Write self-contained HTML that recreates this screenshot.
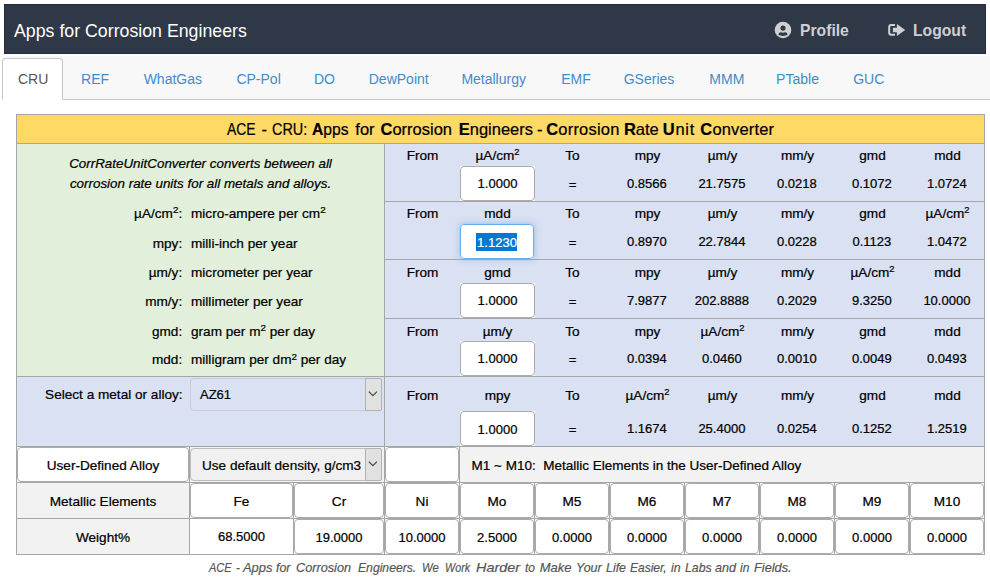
<!DOCTYPE html>
<html lang="en">
<head>
<meta charset="utf-8">
<title>ACE - CRU: Corrosion Rate Unit Converter</title>
<style>
*{box-sizing:border-box;}
html,body{margin:0;padding:0;background:#fff;}
body{width:990px;height:579px;position:relative;overflow:hidden;font-family:"Liberation Sans",sans-serif;font-size:13px;color:#000;}
#hdr{position:absolute;left:4px;top:4px;width:982px;height:50px;background:#2f3847;box-shadow:inset 0 0 0 1px #222c3c;}
#brand{position:absolute;left:10px;top:0;height:50px;line-height:54px;font-size:17.75px;color:#fff;white-space:nowrap;}
.hl{position:absolute;top:0;height:50px;line-height:53px;font-size:15.7px;font-weight:bold;color:#cfd0d2;white-space:nowrap;}
.ico{position:absolute;}
#nav{position:absolute;left:2px;top:56px;width:988px;height:44px;background:#f8f8f8;border-bottom:1px solid #c6c6c6;}
.tab{position:absolute;top:2px;display:block;height:42px;line-height:20px;padding:10px 15px;border:1px solid transparent;margin-right:2px;font-size:14px;color:#428bca;white-space:nowrap;}
.tab.on{color:#555;background:#fff;border:1px solid #c6c6c6;border-bottom-color:#fff;border-radius:4px 4px 0 0;}
#tbl{position:absolute;left:16px;top:114px;width:969px;height:441px;background:#a6a6a6;}
.bg{position:absolute;}
.y{background:#ffd966;}
.g{background:#e2efda;}
.b{background:#d9e1f2;}
.gr{background:#f2f2f2;}
.w{background:#fff;}
.t{position:absolute;white-space:nowrap;line-height:16px;height:16px;font-size:13.6px;}
.t,.in,.sel,#title{-webkit-text-stroke:0.22px #000;}
.n{font-size:13px;}
.c{text-align:center;}
.r{text-align:right;}
.i{font-style:italic;font-size:13.4px;}
.in{position:absolute;height:35px;line-height:36px;font-size:13px;background:#fff;text-align:center;white-space:nowrap;}
.lo{line-height:38px;}
.in::after{content:"";position:absolute;left:0;top:0;right:0;bottom:0;border:1px solid #ababab;border-radius:4px;}
.sel{position:absolute;height:33px;line-height:33px;font-size:13.6px;border:1px solid #bcbcbc;border-radius:4px;white-space:nowrap;padding-left:9px;}
.arr{position:absolute;right:-1px;top:-1px;width:17px;height:33px;background:#e1e1e1;border:1px solid #b2b2b2;border-radius:0 2px 2px 0;}
sup{font-size:9.4px;line-height:0;vertical-align:baseline;position:relative;top:-4.6px;}
sup.s2{font-size:9.9px;top:-4.5px;}
#title{position:absolute;left:17px;top:115px;width:968px;height:28px;line-height:29px;text-align:center;font-size:16.5px;white-space:nowrap;}
#title span{position:absolute;top:0;transform-origin:0 50%;}
#foot span{position:absolute;top:0;transform-origin:0 50%;}
#foot{position:absolute;left:0;top:559px;width:990px;height:18px;line-height:18px;font-style:italic;color:#555;-webkit-text-stroke:0.2px #555;font-size:12.96px;white-space:nowrap;}
#nob::after{display:none;}
#foc{width:74px !important;line-height:38px;border-radius:4px;box-shadow:0 0 6px rgba(102,175,233,.7);}
#foc::after{border-color:#66afe9;}
.selt{-webkit-text-stroke:0.2px #fff;background:#0078d7;color:#fff;padding:2px 0 1px 1px;margin-left:-1px;}
</style>
</head>
<body>

<div id="hdr"><div id="brand">Apps for Corrosion Engineers</div>
<svg class="ico" style="left:770.4px;top:16.7px" width="18" height="18" viewBox="0 0 18 18"><circle cx="9" cy="9" r="8.3" fill="#cfd0d2"/><circle cx="9" cy="7.1" r="2.55" fill="#2f3847"/><path d="M4.5 13.5 C4.5 12 5.8 11.3 7 11.3 C8 11.85 10 11.85 11 11.3 C12.2 11.3 13.5 12 13.5 13.5 C12.4 14.5 10.6 14.9 9 14.9 C7.4 14.9 5.6 14.5 4.5 13.5 Z" fill="#2f3847"/></svg>
<div class="hl" style="left:796px">Profile</div>
<svg class="ico" style="left:883px;top:18px" width="20" height="16" viewBox="0 0 20 16"><path d="M8 3 H4.2 C3.1 3 2.2 3.9 2.2 5 V10.8 C2.2 11.9 3.1 12.8 4.2 12.8 H8" fill="none" stroke="#cfd0d2" stroke-width="2"/><path d="M5.9 5.85 H9.9 V2 L18.2 8 L9.9 14 V10.15 H5.9 Z" fill="#cfd0d2"/></svg>
<div class="hl" style="left:909px">Logout</div>
</div>
<div id="nav">
<div class="tab on" style="left:0px;padding-left:15px;padding-right:0;width:61px">CRU</div>
<div class="tab" style="left:63.04px">REF</div>
<div class="tab" style="left:125.64px">WhatGas</div>
<div class="tab" style="left:218.4px">CP-Pol</div>
<div class="tab" style="left:295.96px">DO</div>
<div class="tab" style="left:350.76px">DewPoint</div>
<div class="tab" style="left:443.38px">Metallurgy</div>
<div class="tab" style="left:543.28px">EMF</div>
<div class="tab" style="left:605.74px">GSeries</div>
<div class="tab" style="left:691.32px">MMM</div>
<div class="tab" style="left:758.12px">PTable</div>
<div class="tab" style="left:835.23px">GUC</div>
</div>
<div id="tbl"></div>
<div class="bg y" style="left:17px;top:115px;width:967px;height:28px;"></div>
<div class="bg g" style="left:17px;top:144px;width:367px;height:232px;"></div>
<div class="bg b" style="left:385px;top:144px;width:599px;height:57px;"></div>
<div class="bg b" style="left:385px;top:202px;width:599px;height:57px;"></div>
<div class="bg b" style="left:385px;top:260px;width:599px;height:58px;"></div>
<div class="bg b" style="left:385px;top:319px;width:599px;height:57px;"></div>
<div class="bg b" style="left:17px;top:377px;width:367px;height:69px;"></div>
<div class="bg b" style="left:385px;top:377px;width:599px;height:69px;"></div>
<div class="bg gr" style="left:17px;top:447px;width:172px;height:35px;"></div>
<div class="bg gr" style="left:190px;top:447px;width:194px;height:35px;"></div>
<div class="bg gr" style="left:385px;top:447px;width:74px;height:35px;"></div>
<div class="bg gr" style="left:460px;top:447px;width:524px;height:35px;"></div>
<div class="bg gr" style="left:17px;top:483px;width:172px;height:35px;"></div>
<div class="bg gr" style="left:17px;top:519px;width:172px;height:35px;"></div>
<div class="bg gr" style="left:190px;top:483px;width:103px;height:35px;"></div>
<div class="bg gr" style="left:190px;top:519px;width:103px;height:35px;"></div>
<div class="bg gr" style="left:294px;top:483px;width:90px;height:35px;"></div>
<div class="bg gr" style="left:294px;top:519px;width:90px;height:35px;"></div>
<div class="bg gr" style="left:385px;top:483px;width:74px;height:35px;"></div>
<div class="bg gr" style="left:385px;top:519px;width:74px;height:35px;"></div>
<div class="bg gr" style="left:460px;top:483px;width:74px;height:35px;"></div>
<div class="bg gr" style="left:460px;top:519px;width:74px;height:35px;"></div>
<div class="bg gr" style="left:535px;top:483px;width:74px;height:35px;"></div>
<div class="bg gr" style="left:535px;top:519px;width:74px;height:35px;"></div>
<div class="bg gr" style="left:610px;top:483px;width:74px;height:35px;"></div>
<div class="bg gr" style="left:610px;top:519px;width:74px;height:35px;"></div>
<div class="bg gr" style="left:685px;top:483px;width:74px;height:35px;"></div>
<div class="bg gr" style="left:685px;top:519px;width:74px;height:35px;"></div>
<div class="bg gr" style="left:760px;top:483px;width:74px;height:35px;"></div>
<div class="bg gr" style="left:760px;top:519px;width:74px;height:35px;"></div>
<div class="bg gr" style="left:835px;top:483px;width:74px;height:35px;"></div>
<div class="bg gr" style="left:835px;top:519px;width:74px;height:35px;"></div>
<div class="bg gr" style="left:910px;top:483px;width:74px;height:35px;"></div>
<div class="bg gr" style="left:910px;top:519px;width:74px;height:35px;"></div>
<div id="title"><span style="left:210.3px;transform:scaleX(0.845);">ACE</span> <span style="left:244.6px;">-</span> <span style="left:255.1px;transform:scaleX(0.875);">CRU:</span> <span style="left:295.3px;transform:scaleX(0.95);"><b>A</b>pps</span> <span style="left:338.3px;">for</span> <span style="left:363.5px;"><b>C</b>orrosion</span> <span style="left:441.7px;"><b>E</b>ngineers</span> <span style="left:519.9px;">-</span> <span style="left:529.2px;letter-spacing:0.2px;"><b>C</b>orrosion</span> <span style="left:606.9px;"><b>R</b>ate</span> <span style="left:645.8px;letter-spacing:0.7px;"><b>U</b>nit</span> <span style="left:683.3px;letter-spacing:0.15px;"><b>C</b>onverter</span></div>
<div class="t c i" style="left:17px;top:155.6px;width:367px;">CorrRateUnitConverter converts between all</div>
<div class="t c i" style="left:17px;top:176.1px;width:367px;">corrosion rate units for all metals and alloys.</div>
<div class="t r" style="left:17px;top:205.5px;width:165.2px;">µA/cm<sup class="s2">2</sup>:</div>
<div class="t " style="left:191px;top:205.5px;">micro-ampere per cm<sup class="s2">2</sup></div>
<div class="t r" style="left:17px;top:235.5px;width:165.2px;">mpy:</div>
<div class="t " style="left:191px;top:235.5px;">milli-inch per year</div>
<div class="t r" style="left:17px;top:264.5px;width:165.2px;">µm/y:</div>
<div class="t " style="left:191px;top:264.5px;">micrometer per year</div>
<div class="t r" style="left:17px;top:293.5px;width:165.2px;">mm/y:</div>
<div class="t " style="left:191px;top:293.5px;">millimeter per year</div>
<div class="t r" style="left:17px;top:323.5px;width:165.2px;">gmd:</div>
<div class="t " style="left:191px;top:323.5px;">gram per m<sup class="s2">2</sup> per day</div>
<div class="t r" style="left:17px;top:352px;width:165.2px;">mdd:</div>
<div class="t " style="left:191px;top:352px;">milligram per dm<sup class="s2">2</sup> per day</div>
<div class="t c" style="left:385px;top:147.5px;width:75px;">From</div>
<div class="t c" style="left:460px;top:147.5px;width:75px;">µA/cm<sup>2</sup></div>
<div class="in" style="left:460px;top:166px;width:75px">1.0000</div>
<div class="t c" style="left:535px;top:147.5px;width:75px;">To</div>
<div class="t c n" style="left:535px;top:176.5px;width:75px;">=</div>
<div class="t c" style="left:610px;top:147.5px;width:75px;">mpy</div>
<div class="t c n" style="left:609.4px;top:175.5px;width:75px;">0.8566</div>
<div class="t c" style="left:685px;top:147.5px;width:75px;">µm/y</div>
<div class="t c n" style="left:684.4px;top:175.5px;width:75px;">21.7575</div>
<div class="t c" style="left:760px;top:147.5px;width:75px;">mm/y</div>
<div class="t c n" style="left:759.4px;top:175.5px;width:75px;">0.0218</div>
<div class="t c" style="left:835px;top:147.5px;width:75px;">gmd</div>
<div class="t c n" style="left:834.4px;top:175.5px;width:75px;">0.1072</div>
<div class="t c" style="left:910px;top:147.5px;width:75px;">mdd</div>
<div class="t c n" style="left:909.4px;top:175.5px;width:75px;">1.0724</div>
<div class="t c" style="left:385px;top:205.5px;width:75px;">From</div>
<div class="t c" style="left:460px;top:205.5px;width:75px;">mdd</div>
<div class="in" style="left:460px;top:224px;width:75px;" id="foc"><span class="selt">1.1230</span></div>
<div class="t c" style="left:535px;top:205.5px;width:75px;">To</div>
<div class="t c n" style="left:535px;top:234.5px;width:75px;">=</div>
<div class="t c" style="left:610px;top:205.5px;width:75px;">mpy</div>
<div class="t c n" style="left:609.4px;top:233.5px;width:75px;">0.8970</div>
<div class="t c" style="left:685px;top:205.5px;width:75px;">µm/y</div>
<div class="t c n" style="left:684.4px;top:233.5px;width:75px;">22.7844</div>
<div class="t c" style="left:760px;top:205.5px;width:75px;">mm/y</div>
<div class="t c n" style="left:759.4px;top:233.5px;width:75px;">0.0228</div>
<div class="t c" style="left:835px;top:205.5px;width:75px;">gmd</div>
<div class="t c n" style="left:834.4px;top:233.5px;width:75px;">0.1123</div>
<div class="t c" style="left:910px;top:205.5px;width:75px;">µA/cm<sup>2</sup></div>
<div class="t c n" style="left:909.4px;top:233.5px;width:75px;">1.0472</div>
<div class="t c" style="left:385px;top:265px;width:75px;">From</div>
<div class="t c" style="left:460px;top:265px;width:75px;">gmd</div>
<div class="in" style="left:460px;top:283px;width:75px">1.0000</div>
<div class="t c" style="left:535px;top:265px;width:75px;">To</div>
<div class="t c n" style="left:535px;top:294px;width:75px;">=</div>
<div class="t c" style="left:610px;top:265px;width:75px;">mpy</div>
<div class="t c n" style="left:609.4px;top:293px;width:75px;">7.9877</div>
<div class="t c" style="left:685px;top:265px;width:75px;">µm/y</div>
<div class="t c n" style="left:684.4px;top:293px;width:75px;">202.8888</div>
<div class="t c" style="left:760px;top:265px;width:75px;">mm/y</div>
<div class="t c n" style="left:759.4px;top:293px;width:75px;">0.2029</div>
<div class="t c" style="left:835px;top:265px;width:75px;">µA/cm<sup>2</sup></div>
<div class="t c n" style="left:834.4px;top:293px;width:75px;">9.3250</div>
<div class="t c" style="left:910px;top:265px;width:75px;">mdd</div>
<div class="t c n" style="left:909.4px;top:293px;width:75px;">10.0000</div>
<div class="t c" style="left:385px;top:324px;width:75px;">From</div>
<div class="t c" style="left:460px;top:324px;width:75px;">µm/y</div>
<div class="in" style="left:460px;top:341px;width:75px">1.0000</div>
<div class="t c" style="left:535px;top:324px;width:75px;">To</div>
<div class="t c n" style="left:535px;top:352px;width:75px;">=</div>
<div class="t c" style="left:610px;top:324px;width:75px;">mpy</div>
<div class="t c n" style="left:609.4px;top:351px;width:75px;">0.0394</div>
<div class="t c" style="left:685px;top:324px;width:75px;">µA/cm<sup>2</sup></div>
<div class="t c n" style="left:684.4px;top:351px;width:75px;">0.0460</div>
<div class="t c" style="left:760px;top:324px;width:75px;">mm/y</div>
<div class="t c n" style="left:759.4px;top:351px;width:75px;">0.0010</div>
<div class="t c" style="left:835px;top:324px;width:75px;">gmd</div>
<div class="t c n" style="left:834.4px;top:351px;width:75px;">0.0049</div>
<div class="t c" style="left:910px;top:324px;width:75px;">mdd</div>
<div class="t c n" style="left:909.4px;top:351px;width:75px;">0.0493</div>
<div class="t c" style="left:385px;top:388px;width:75px;">From</div>
<div class="t c" style="left:460px;top:388px;width:75px;">mpy</div>
<div class="in lo" style="left:460px;top:411px;width:75px">1.0000</div>
<div class="t c" style="left:535px;top:388px;width:75px;">To</div>
<div class="t c n" style="left:535px;top:422px;width:75px;">=</div>
<div class="t c" style="left:610px;top:388px;width:75px;">µA/cm<sup>2</sup></div>
<div class="t c n" style="left:609.4px;top:421px;width:75px;">1.1674</div>
<div class="t c" style="left:685px;top:388px;width:75px;">µm/y</div>
<div class="t c n" style="left:684.4px;top:421px;width:75px;">25.4000</div>
<div class="t c" style="left:760px;top:388px;width:75px;">mm/y</div>
<div class="t c n" style="left:759.4px;top:421px;width:75px;">0.0254</div>
<div class="t c" style="left:835px;top:388px;width:75px;">gmd</div>
<div class="t c n" style="left:834.4px;top:421px;width:75px;">0.1252</div>
<div class="t c" style="left:910px;top:388px;width:75px;">mdd</div>
<div class="t c n" style="left:909.4px;top:421px;width:75px;">1.2519</div>
<div class="t r" style="left:17px;top:387.4px;width:165.6px;">Select a metal or alloy:</div>
<div class="sel" style="left:190px;top:378px;width:192px;border-color:#c8cbd2;font-size:13px;line-height:32px">AZ61<div class="arr"><svg width="15" height="32" viewBox="0 0 15 32"><path d="M2.9 12.7 L6.9 16.7 L10.9 12.7" fill="none" stroke="#444" stroke-width="1.2"/></svg></div></div>
<div class="in lo" style="left:17px;top:447px;width:172px;font-size:13.6px">User-Defined Alloy</div>
<div class="sel" style="left:190px;top:448px;width:192px;background:#f0f0f0;padding-left:11px">Use default density, g/cm3<div class="arr"><svg width="15" height="32" viewBox="0 0 15 32"><path d="M2.9 12.7 L6.9 16.7 L10.9 12.7" fill="none" stroke="#444" stroke-width="1.2"/></svg></div></div>
<div class="in" style="left:385px;top:447px;width:74px"></div>
<div class="t " style="left:471.5px;top:457.6px;font-size:13.5px;">M1 ~ M10:&nbsp; Metallic Elements in the User-Defined Alloy</div>
<div class="t c" style="left:17px;top:494px;width:172px;">Metallic Elements</div>
<div class="t c" style="left:17px;top:530px;width:172px;">Weight%</div>
<div class="in lo" style="left:190px;top:483px;width:103px;font-size:13.6px">Fe</div>
<div class="in" id="nob" style="left:190px;top:519px;width:103px;">68.5000</div>
<div class="in lo" style="left:294px;top:483px;width:90px;font-size:13.6px">Cr</div>
<div class="in lo" style="left:294px;top:519px;width:90px">19.0000</div>
<div class="in lo" style="left:385px;top:483px;width:74px;font-size:13.6px">Ni</div>
<div class="in lo" style="left:385px;top:519px;width:74px">10.0000</div>
<div class="in lo" style="left:460px;top:483px;width:74px;font-size:13.6px">Mo</div>
<div class="in lo" style="left:460px;top:519px;width:74px">2.5000</div>
<div class="in lo" style="left:535px;top:483px;width:74px;font-size:13.6px">M5</div>
<div class="in lo" style="left:535px;top:519px;width:74px">0.0000</div>
<div class="in lo" style="left:610px;top:483px;width:74px;font-size:13.6px">M6</div>
<div class="in lo" style="left:610px;top:519px;width:74px">0.0000</div>
<div class="in lo" style="left:685px;top:483px;width:74px;font-size:13.6px">M7</div>
<div class="in lo" style="left:685px;top:519px;width:74px">0.0000</div>
<div class="in lo" style="left:760px;top:483px;width:74px;font-size:13.6px">M8</div>
<div class="in lo" style="left:760px;top:519px;width:74px">0.0000</div>
<div class="in lo" style="left:835px;top:483px;width:74px;font-size:13.6px">M9</div>
<div class="in lo" style="left:835px;top:519px;width:74px">0.0000</div>
<div class="in lo" style="left:910px;top:483px;width:74px;font-size:13.6px">M10</div>
<div class="in lo" style="left:910px;top:519px;width:74px">0.0000</div>
<div id="foot"><span style="left:208.8px;transform:scaleX(0.853)">ACE</span> <span style="left:236.1px;transform:scaleX(0.884)">-</span> <span style="left:243px;transform:scaleX(0.997)">Apps</span> <span style="left:276.1px;transform:scaleX(0.960)">for</span> <span style="left:296.1px;transform:scaleX(0.980)">Corrosion</span> <span style="left:358.2px;transform:scaleX(0.940)">Engineers.</span> <span style="left:422.4px;transform:scaleX(0.870)">We</span> <span style="left:445.2px;transform:scaleX(0.831)">Work</span> <span style="left:475.7px;transform:scaleX(1.111)">Harder</span> <span style="left:524.7px;transform:scaleX(0.926)">to</span> <span style="left:539.7px;transform:scaleX(1.000)">Make</span> <span style="left:575.7px;transform:scaleX(0.963)">Your</span> <span style="left:605.7px;transform:scaleX(0.957)">Life</span> <span style="left:629.7px;transform:scaleX(0.927)">Easier,</span> <span style="left:670.7px;transform:scaleX(0.960)">in</span> <span style="left:684.7px;transform:scaleX(0.950)">Labs</span> <span style="left:715.4px;transform:scaleX(0.972)">and</span> <span style="left:740.4px;transform:scaleX(0.921)">in</span> <span style="left:753.7px;transform:scaleX(0.987)">Fields.</span></div>
</body>
</html>
